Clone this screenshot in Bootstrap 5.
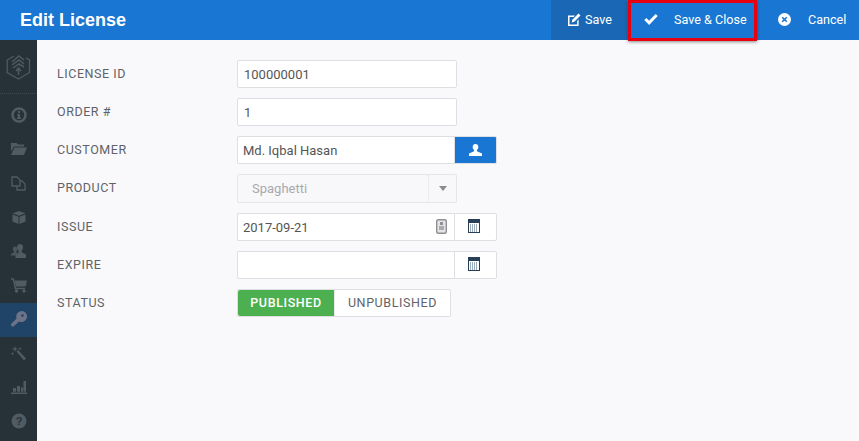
<!DOCTYPE html>
<html lang="en">
<head>
<meta charset="utf-8">
<title>Edit License</title>
<link href="https://cdn.jsdelivr.net/npm/bootstrap@5.3.0/dist/css/bootstrap.min.css" rel="stylesheet">
<style>
html,body{height:100%;overflow:hidden}
body{font-family:Roboto,"Liberation Sans",sans-serif;background:#f9f9fc;color:#555;font-size:13px}
.topbar{height:40px;background:#1976d2;color:#fff}
.page-title{font-family:"Liberation Sans",Arial,sans-serif;font-weight:700;font-size:18px;margin:0 0 0 20px;line-height:40px;color:#fff}
.act{display:flex;align-items:center;color:#fff;font-size:12.6px;height:40px;text-decoration:none;background:none;border:0;padding:0}
.act-save{width:76px;background:#1a68b5;padding-left:17px;margin-right:1px}
.act-save svg{margin-right:4px;margin-left:-1px}
.act-close{width:129px;height:41px;border:3px solid #e8000f;box-shadow:0 1px 3px rgba(0,0,0,.45);padding-left:13px;align-self:flex-start;position:relative;z-index:2}
.act-close svg{margin-right:16px;margin-bottom:3px}
.act-cancel{width:102px;padding-left:22px}
.act-cancel svg{margin-right:17px;margin-bottom:1px;margin-left:-1px}
.shell{height:401px}
.rail{width:37px;background:#263238;flex:none}
.rail-logo{height:54px;border-bottom:1px dotted #3d4a51;margin-bottom:5px}
.rail-item{height:34px;display:flex;align-items:center;justify-content:center}
.rail-item svg{opacity:.88;margin-bottom:2px}
.rail-item.on{background:#1f4468}
.formwrap{padding:20px 0 0 20px}
.frow{display:flex;align-items:center;height:28px;margin-bottom:10px}
.frow.tall{height:29px}
.flabel{width:180px;font-size:12.5px;letter-spacing:.55px;color:#5f6368;text-transform:uppercase}
.fbox{width:220px;height:28px;background:#fff;border:1px solid #dfdfe3;border-radius:2px;font-size:13px;color:#555;padding:0 6px;box-shadow:none}
.fbox:focus{border-color:#dfdfe3;box-shadow:none}
.igrp{width:260px;height:28px;display:flex}
.igrp .fbox{width:217px;border-radius:2px 0 0 2px;border-right:0;padding-left:5px;padding-right:5px}
.iaddon{width:43px;height:28px;display:flex;align-items:center;justify-content:center;background:#fff;border:1px solid #dfdfe3;border-radius:0 2px 2px 0}
.iaddon.blue{background:#1976d2}
.iaddon.cal{padding-right:3px;padding-bottom:2px}
.selbox{width:220px;height:29px;display:flex;background:#f8f8fa;border:1px solid #e6e6ea;border-radius:2px;color:#a9a9ad;font-size:13px}
.selbox .seltxt{flex:1;padding-left:14px;line-height:27px}
.selbox .selbtn{width:28px;border-left:1px dotted #e0e0e4;display:flex;align-items:center;justify-content:center}
.fld-wrap{position:relative;flex:none;display:flex;width:217px}
.badge-ic{position:absolute;right:7px;top:6px;display:flex}
.togg{display:flex;height:28px;border:1px solid #dfdfe3;border-radius:2px;background:#fff;width:214px;font-size:12.5px;letter-spacing:.6px}
.togg span{display:flex;align-items:center;justify-content:center}
.togg .t-on{width:96px;background:#4caf50;color:#fff;border-radius:2px 0 0 2px;font-weight:500}
.togg .t-off{flex:1;color:#5f6368;border-left:1px solid #e8e8ea}
</style>
</head>
<body>
<header class="topbar d-flex align-items-start justify-content-between">
  <h1 class="page-title">Edit License</h1>
  <div class="d-flex">
    <a class="act act-save" href="#"><svg width="14" height="14" viewBox="0 0 14 14"><path fill="#fff" d="M1 2.500h7L6.600 4H2.500v7.500h7.600V8L11.600 6.500V13H1z"/><path fill="#fff" d="M11.500.6l2 2-6.200 6.200-2.600.6.6-2.600z"/></svg>Save</a>
    <a class="act act-close" href="#"><svg width="14" height="12" viewBox="0 0 14 12"><path fill="none" stroke="#fff" stroke-width="3" d="M1.300 6l3.800 3.800 7.600-7.800"/></svg>Save &amp; Close</a>
    <a class="act act-cancel" href="#"><svg width="13" height="13" viewBox="0 0 13 13"><circle cx="6.500" cy="6.500" r="6.500" fill="#fff"/><path stroke="#1976d2" stroke-width="1.600" d="M4.200 4.200l4.600 4.600M8.800 4.200l-4.600 4.600"/></svg>Cancel</a>
  </div>
</header>
<div class="shell d-flex">
  <nav class="rail d-flex flex-column">
    <div class="rail-logo d-flex align-items-center justify-content-center">
      <svg width="25" height="27" viewBox="0 0 25 27" fill="none" stroke="#4e5a61"><path stroke-width="1.300" d="M8 3L1.200 7v12.500L12.500 26l11-6.500V7L20 5"/><path stroke-width="1.500" d="M6 9l7-6 5 4M6 12l7-5 5 4M7 15l6-4 5 3M12.500 22v-7M10 18l2.500-3 2.500 3"/></svg>
    </div>
    <div class="rail-item"><svg width="16" height="16" viewBox="0 0 16 16"><circle cx="8" cy="8" r="6.500" fill="none" stroke="#56626a" stroke-width="2.600"/><path fill="#56626a" d="M7 4h2v2H7zM6.300 7H9v3.500h1V12H6v-1.500h1V8.500h-.7z"/></svg></div>
    <div class="rail-item"><svg width="16" height="12" viewBox="0 0 16 12"><path fill="#56626a" d="M0 0h5.500L7 1.500h6V3.500H3L0 8.500zM3.500 4.500H16L13 12H0z"/></svg></div>
    <div class="rail-item"><svg width="15" height="15" viewBox="0 0 15 15" fill="none" stroke="#56626a" stroke-width="1.300"><path d="M1 1h5l3 3v6H1z"/><path d="M9 5h2l3 3v6H6v-3.500"/></svg></div>
    <div class="rail-item"><svg width="14" height="13" viewBox="0 0 14 13"><path fill="#56626a" d="M7 0l6.500 2.300L7 4.700.5 2.300zM.5 3.500L6.500 5.700V13L.5 10.500zM13.500 3.500v7L7.500 13V5.700z"/></svg></div>
    <div class="rail-item"><svg width="15" height="14" viewBox="0 0 15 14"><path fill="#56626a" d="M4 2.500c1.500 0 2.300 1 2.300 2.500 0 1-.4 1.800-.9 2.300V8.500L8 10v1.500H0V10l2.800-1.500V7.300C2.200 6.800 1.800 6 1.800 5 1.800 3.500 2.500 2.500 4 2.500z" opacity=".9"/><path fill="#56626a" d="M9 0c2 0 3 1.400 3 3.200 0 1.600-.6 2.800-1.300 3.500V8.200L15 10.500V14H4.500v-2.500l3-1.500V6.700C6.700 6 6 4.800 6 3.200 6 1.400 7 0 9 0z"/></svg></div>
    <div class="rail-item"><svg width="16" height="15" viewBox="0 0 16 15"><path fill="none" stroke="#56626a" stroke-width="1.500" d="M0 1h2.400l2 9.500H14"/><path fill="#56626a" d="M3.500 2.500H16l-1.300 6H5z"/><circle cx="5.500" cy="13" r="1.700" fill="#56626a"/><circle cx="13" cy="13" r="1.700" fill="#56626a"/></svg></div>
    <div class="rail-item on"><svg width="16" height="16" viewBox="0 0 16 16"><path fill="#7a7a8c" d="M10.500 0A5.500 5.500 0 1 1 8 10.400L2.500 15.500.5 15.500 0 13l5.600-5.500A5.500 5.500 0 0 1 10.500 0z"/><circle cx="11.500" cy="4.500" r="1.300" fill="#1f4468"/></svg></div>
    <div class="rail-item"><svg width="15" height="15" viewBox="0 0 15 15"><path fill="#56626a" d="M5.500 5.500l1.500-1.500 8 8.500-2 2zM4 0l.8 2.200L7 3l-2.200.8L4 6l-.8-2.200L1 3l2.200-.8zM1.500 6l.5 1.300 1.300.5-1.300.5-.5 1.300L1 8.300 0 7.800l1-.5zM9 1l.5 1.300 1.300.5-1.300.5L9 4.600l-.5-1.300-1.300-.5 1.300-.5z"/></svg></div>
    <div class="rail-item"><svg width="16" height="13" viewBox="0 0 16 13"><path fill="#56626a" d="M0 11.500h16V13H0zM2 7h3v3.700H2zM6 5h3v5.700H6zM10 6.500h2v4.200h-2zM12.500 0H15v10.700h-2.500z"/></svg></div>
    <div class="rail-item"><svg width="16" height="16" viewBox="0 0 16 16"><circle cx="8" cy="8" r="7.500" fill="#56626a"/><text x="8" y="12" text-anchor="middle" font-family="Liberation Sans" font-weight="700" font-size="11" fill="#263238">?</text></svg></div>
  </nav>
  <main class="formwrap flex-grow-1">
    <div class="frow"><label class="flabel">License ID</label><input class="fbox form-control" value="100000001"></div>
    <div class="frow"><label class="flabel">Order #</label><input class="fbox form-control" value="1"></div>
    <div class="frow"><label class="flabel">Customer</label>
      <div class="igrp"><input class="fbox form-control" value="Md. Iqbal Hasan"><span class="iaddon blue"><svg width="13" height="12" viewBox="0 0 13 12"><path fill="#fff" d="M6.500 0C8.300 0 9.300 1.300 9.300 3c0 1.300-.6 2.500-1.400 3v1.300L13 9.500V12H0V9.500l5.100-2.200V6C4.300 5.500 3.700 4.300 3.700 3 3.700 1.300 4.700 0 6.500 0z"/></svg></span></div></div>
    <div class="frow tall"><label class="flabel">Product</label>
      <div class="selbox"><span class="seltxt">Spaghetti</span><span class="selbtn"><svg width="8" height="5" viewBox="0 0 8 5"><path fill="#8a8a90" d="M0 0h8L4 5z"/></svg></span></div></div>
    <div class="frow"><label class="flabel">Issue</label>
      <div class="igrp"><div class="fld-wrap"><input class="fbox form-control" value="2017-09-21"><span class="badge-ic"><svg width="11" height="15" viewBox="0 0 11 15"><rect x=".7" y=".7" width="9.600" height="13.600" rx="1.500" fill="#e4e4e6" stroke="#8f8f94" stroke-width="1.400"/><rect x="4" y="3" width="3" height="3" fill="#8f8f94"/><rect x="3" y="7" width="5" height="4" fill="#a9a9ae"/></svg></span></div><span class="iaddon cal"><svg width="12" height="14" viewBox="0 0 12 14"><rect width="12" height="14" fill="#263f56"/><rect x="1" y="4" width="10" height="9" fill="#fff"/><path stroke="#3d5a78" stroke-width="1" stroke-dasharray="1 1" d="M2 6h8M2 8h8M2 10h8M2 12h8"/></svg></span></div></div>
    <div class="frow"><label class="flabel">Expire</label>
      <div class="igrp"><input class="fbox form-control" value=""><span class="iaddon cal"><svg width="12" height="14" viewBox="0 0 12 14"><rect width="12" height="14" fill="#263f56"/><rect x="1" y="4" width="10" height="9" fill="#fff"/><path stroke="#3d5a78" stroke-width="1" stroke-dasharray="1 1" d="M2 6h8M2 8h8M2 10h8M2 12h8"/></svg></span></div></div>
    <div class="frow"><label class="flabel">Status</label>
      <div class="togg"><span class="t-on">PUBLISHED</span><span class="t-off">UNPUBLISHED</span></div></div>
  </main>
</div>
<script src="https://cdn.jsdelivr.net/npm/bootstrap@5.3.0/dist/js/bootstrap.bundle.min.js"></script>
</body>
</html>
